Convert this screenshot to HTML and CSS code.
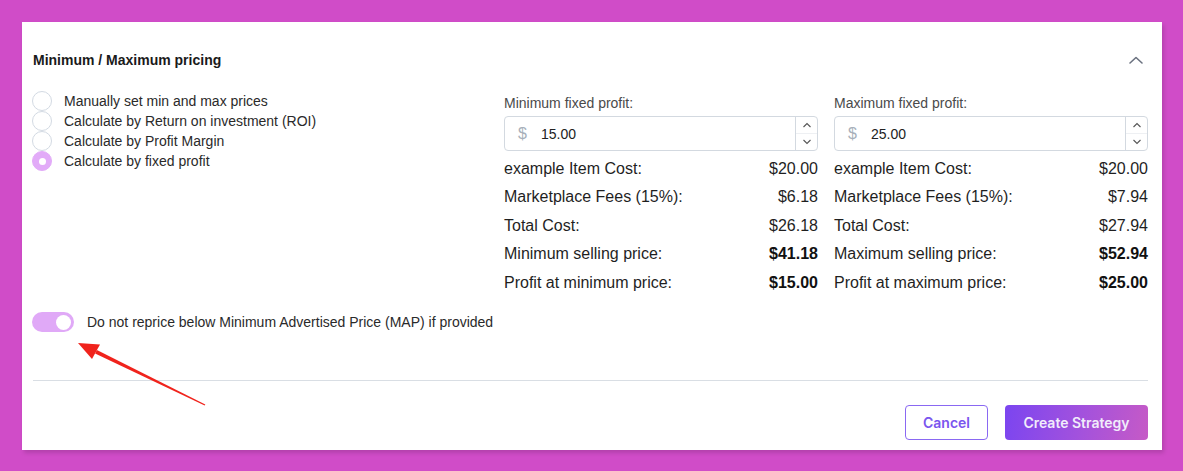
FILE: index.html
```html
<!DOCTYPE html>
<html>
<head>
<meta charset="utf-8">
<link rel="stylesheet" href="styles.css">
</head>
<body>
<div class="panel">
  <div class="header">
    <h2 class="title">Minimum / Maximum pricing</h2>
    <svg class="chev" width="16" height="10" viewBox="0 0 16 10"><path d="M2 8 L8 2.5 L14 8" fill="none" stroke="#6b7280" stroke-width="1.6" stroke-linecap="round" stroke-linejoin="round"/></svg>
  </div>
  <div class="body">
    <div class="radios">
      <label class="radio"><span class="circle"></span><span>Manually set min and max prices</span></label>
      <label class="radio"><span class="circle"></span><span>Calculate by Return on investment (ROI)</span></label>
      <label class="radio"><span class="circle"></span><span>Calculate by Profit Margin</span></label>
      <label class="radio"><span class="circle checked"></span><span>Calculate by fixed profit</span></label>
    </div>
    <div class="col">
      <div class="field-label">Minimum fixed profit:</div>
      <div class="input">
        <span class="cur">$</span><span class="val">15.00</span>
        <span class="spin"><span class="up"><svg width="10" height="6" viewBox="0 0 10 6"><path d="M1.5 5 L5 1.5 L8.5 5" fill="none" stroke="#555" stroke-width="1.1"/></svg></span><span class="down"><svg width="10" height="6" viewBox="0 0 10 6"><path d="M1.5 1 L5 4.5 L8.5 1" fill="none" stroke="#555" stroke-width="1.1"/></svg></span></span>
      </div>
      <div class="row"><span>example Item Cost:</span><span>$20.00</span></div>
      <div class="row"><span>Marketplace Fees (15%):</span><span>$6.18</span></div>
      <div class="row"><span>Total Cost:</span><span>$26.18</span></div>
      <div class="row"><span>Minimum selling price:</span><b>$41.18</b></div>
      <div class="row"><span>Profit at minimum price:</span><b>$15.00</b></div>
    </div>
    <div class="col">
      <div class="field-label">Maximum fixed profit:</div>
      <div class="input">
        <span class="cur">$</span><span class="val">25.00</span>
        <span class="spin"><span class="up"><svg width="10" height="6" viewBox="0 0 10 6"><path d="M1.5 5 L5 1.5 L8.5 5" fill="none" stroke="#555" stroke-width="1.1"/></svg></span><span class="down"><svg width="10" height="6" viewBox="0 0 10 6"><path d="M1.5 1 L5 4.5 L8.5 1" fill="none" stroke="#555" stroke-width="1.1"/></svg></span></span>
      </div>
      <div class="row"><span>example Item Cost:</span><span>$20.00</span></div>
      <div class="row"><span>Marketplace Fees (15%):</span><span>$7.94</span></div>
      <div class="row"><span>Total Cost:</span><span>$27.94</span></div>
      <div class="row"><span>Maximum selling price:</span><b>$52.94</b></div>
      <div class="row"><span>Profit at maximum price:</span><b>$25.00</b></div>
    </div>
  </div>
  <div class="toggle-row">
    <span class="toggle"><span class="knob"></span></span>
    <span>Do not reprice below Minimum Advertised Price (MAP) if provided</span>
  </div>
  <hr class="divider">
  <div class="actions">
    <button class="btn cancel">Cancel</button>
    <button class="btn create">Create Strategy</button>
  </div>
  <svg class="annot" width="1140" height="427" viewBox="22 22 1140 427">
    <polygon points="205.3,404.5 204.7,405.5 95.1,353.6 96.9,350" fill="#f0231c"/>
    <polygon points="78,343 100,344.5 92,359" fill="#f0231c"/>
  </svg>
</div>
</body>
</html>
```

FILE: styles.css
```css
* { box-sizing: border-box; }
html, body { margin: 0; padding: 0; }
body {
  background: #d04cc8;
  font-family: "Liberation Sans", Arial, sans-serif;
  color: #1f1f1f;
  height: 471px;
  overflow: hidden;
}
.panel {
  position: relative;
  margin: 22px 21px 0 22px;
  background: #fff;
  padding: 30px 14px 10px 11px;
  box-shadow: 2px 3px 4px rgba(0,0,0,0.14);
}
.header {
  display: flex;
  justify-content: space-between;
  align-items: center;
  height: 16px;
}
.title {
  margin: 0;
  font-size: 14px;
  font-weight: bold;
  line-height: 16px;
  color: #1a1a1a;
}
.chev { margin-right: 4px; }
.body {
  display: flex;
  margin-top: 23px;
  gap: 16px;
}
.radios {
  flex: 1;
  display: flex;
  flex-direction: column;
}
.radio {
  display: flex;
  align-items: center;
  height: 20px;
  font-size: 14px;
  color: #2a2a2a;
}
.circle {
  width: 20px;
  height: 20px;
  border-radius: 50%;
  border: 1px solid #d3dae3;
  margin-left: -1px;
  margin-right: 12px;
  flex: none;
  display: flex;
  align-items: center;
  justify-content: center;
  background: #fff;
}
.circle.checked {
  background: #e2abf8;
  border-color: #e2abf8;
}
.circle.checked::after {
  content: "";
  width: 7px;
  height: 7px;
  border-radius: 50%;
  background: #fff;
}
.col {
  width: 314px;
  flex: none;
  padding-top: 4px;
}
.field-label {
  font-size: 14px;
  line-height: 16px;
  color: #4a4a4a;
  margin-bottom: 5px;
}
.input {
  height: 35px;
  border: 1px solid #d3d9e0;
  border-radius: 4px;
  display: flex;
  align-items: center;
  padding-left: 13px;
  font-size: 14px;
  color: #222;
}
.cur {
  color: #a7b0ba;
  font-size: 16px;
  width: 23px;
}
.val { flex: 1; }
.spin {
  width: 22px;
  height: 33px;
  border-left: 1px solid #d3d9e0;
  display: flex;
  flex-direction: column;
}
.spin .up, .spin .down {
  flex: 1;
  display: flex;
  align-items: center;
  justify-content: center;
}
.spin .up { border-bottom: 1px solid #eef0f3; }
.row {
  display: flex;
  justify-content: space-between;
  font-size: 16px;
  line-height: 28.5px;
  color: #1f1f1f;
}
.input + .row { margin-top: 3.5px; }
.row b { font-weight: bold; color: #111; }
.toggle-row {
  display: flex;
  align-items: center;
  margin-top: 15px;
  font-size: 14px;
  color: #2a2a2a;
}
.toggle {
  width: 42px;
  height: 20px;
  border-radius: 10px;
  background: #e0a9f7;
  display: flex;
  align-items: center;
  justify-content: flex-end;
  padding-right: 3px;
  margin-left: -1px;
  margin-right: 13px;
}
.knob {
  width: 15px;
  height: 15px;
  border-radius: 50%;
  background: #fff;
}
.divider {
  border: 0;
  border-top: 1px solid #d9dee4;
  margin: 47.5px 0 0 0;
}
.actions {
  display: flex;
  justify-content: flex-end;
  gap: 17px;
  margin-top: 24px;
}
.btn {
  height: 35px;
  border-radius: 4px;
  font-family: Inter, "Liberation Sans", sans-serif;
  font-size: 14px;
  font-weight: 600;
  cursor: pointer;
}
.cancel {
  width: 83px;
  background: #fff;
  border: 1px solid #8a68f2;
  color: #7a55ee;
}
.create {
  width: 143px;
  border: 0;
  color: #f1ecfb;
  background: linear-gradient(100deg, #7b45f0 0%, #a452dc 55%, #c65ac6 100%);
}
.annot {
  position: absolute;
  left: 0;
  top: 0;
  pointer-events: none;
}
```
